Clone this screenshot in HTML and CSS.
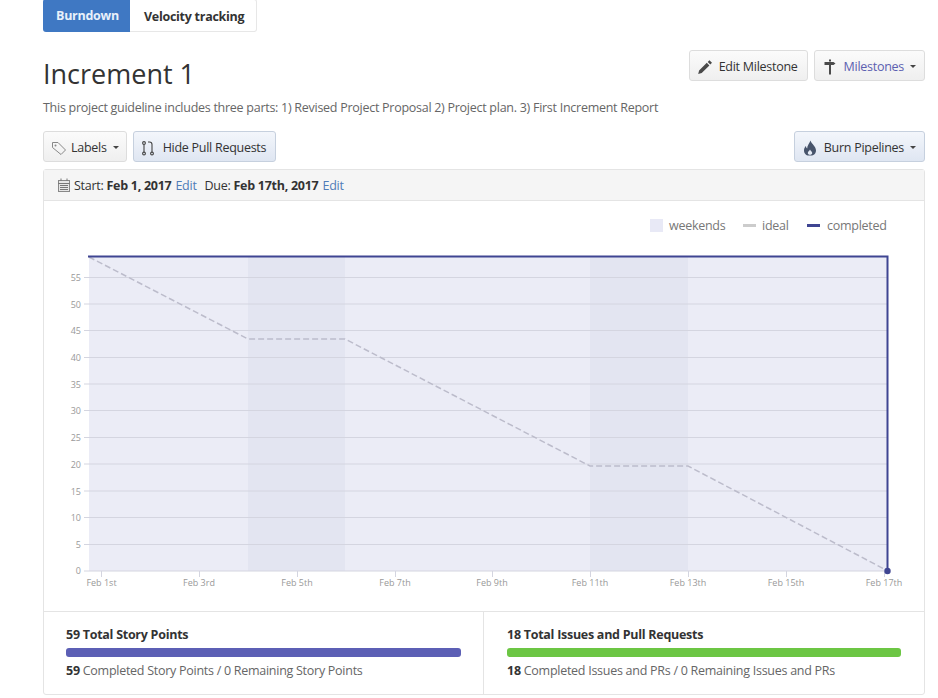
FILE: index.html
```html
<!DOCTYPE html>
<html lang="en">
  <head>
    <title>Increment 1 - Burndown</title>
    <meta name="viewport" content="width=device-width, initial-scale=1">
    <link rel="stylesheet" href="styles.css">
  </head>
  <body>
    <div class="tabs">
      <a class="tab active">Burndown</a>
      <a class="tab">Velocity tracking</a>
    </div>

    <div class="title-row">
      <h1>Increment 1</h1>
      <div class="actions">
        <button class="btn edit-btn">
          <svg class="icon" viewBox="0 0 16 16" width="16" height="16"><path fill="#4a4a4a" d="M12.400 1.200l2.600 2.600-1.700 1.700-2.600-2.600zM9.800 3.800l2.600 2.600-7.700 7.700-3.500.9.900-3.500z"/></svg>
          Edit Milestone
        </button>
        <button class="btn">
          <svg class="icon" viewBox="0 0 16 16" width="16" height="16"><path fill="#4a4a4a" d="M7 .5h2v2H7zM2.500 3h9l2 1.500-2 1.500H9v9.500H7V6H2.500z"/></svg>
          <span class="purple">Milestones</span><span class="caret"></span>
        </button>
      </div>
    </div>
    <p class="desc">This project guideline includes three parts: 1) Revised Project Proposal 2) Project plan. 3) First Increment Report</p>

    <div class="toolbar">
      <div class="actions">
        <button class="btn labels-btn">
          <svg class="icon" viewBox="0 0 16 16" width="16" height="16"><path fill="none" stroke="#888" stroke-width="1" d="M1.500 2.500h5.500l7.500 7.500-4.500 4.500-8.500-7z"/><circle cx="4.500" cy="5.500" r="1" fill="#888"/></svg>
          Labels<span class="caret"></span>
        </button>
        <button class="btn blue hide-btn">
          <svg class="icon" viewBox="0 0 16 16" width="16" height="16"><g fill="none" stroke="#444" stroke-width="1.100"><circle cx="3" cy="3" r="1.400"/><circle cx="3" cy="13.500" r="1.400"/><circle cx="11" cy="13.500" r="1.400"/><path d="M3 4.500v7.500M11 12V4.500q0-2.500-2.500-2.500H7"/></g></svg>
          Hide Pull Requests
        </button>
      </div>
      <button class="btn blue">
        <svg class="icon" viewBox="0 0 16 16" width="16" height="16"><path fill="#47546b" d="M8.500.5c.5 3 5.500 5.500 5.500 10 0 3-2.300 5-5 5H6.800C4 15.500 2 13.400 2 10.500c0-2 .8-3.500 2-4.500 0 1.200.4 2 1.200 2.500C5 5.500 7.500 3.500 8.500.5zM8 9.500c-.6 1.300-2.200 2-2.200 3.500 0 1.200 1 1.800 2.200 1.800s2.200-.6 2.200-1.800C10.200 11.500 8.500 11 8 9.500z"/></svg>
        Burn Pipelines<span class="caret"></span>
      </button>
    </div>

    <div class="panel">
      <div class="panel-head">
        <svg class="cal" viewBox="0 0 14 14" width="14" height="14"><rect x="1.500" y="2.500" width="11" height="11" fill="#e6e6e6" stroke="#888"/><path stroke="#777" d="M1 5.500h12M3 7.500h8M3 9.500h8M3 11.500h8M4 .5v2.500M10 .5v2.500"/></svg>
        <span>Start: <b>Feb 1, 2017</b> <a>Edit</a></span>
        <span class="due">Due: <b>Feb 17th, 2017</b> <a>Edit</a></span>
      </div>

      <svg class="chart" viewBox="0 0 880 410" width="880" height="410">
        <!-- svg top sits at y=201 on the page, left at x=44 -->
        <g transform="translate(-44 -201)">
          <rect x="650" y="219" width="13" height="13" fill="#e8e9f6"/>
          <text class="lg" x="669" y="230">weekends</text>
          <rect x="743" y="224" width="13" height="3" fill="#ccc"/>
          <text class="lg" x="762" y="230">ideal</text>
          <rect x="807" y="224" width="13" height="3" fill="#3f4592"/>
          <text class="lg" x="827" y="230">completed</text>

          <rect x="89" y="257" width="799" height="314" fill="#ebecf6"/>
          <rect x="248" y="257" width="97" height="314" fill="#e3e5f1"/>
          <rect x="590" y="257" width="98" height="314" fill="#e3e5f1"/>

          <g class="grid">
            <path d="M84 277.500H888M84 304H888M84 330.500H888M84 357.500H888M84 384H888M84 410.500H888M84 437.500H888M84 464H888M84 491H888M84 517.500H888M84 544.500H888M84 571H888"/>
            <path d="M101.500 571v6M199.500 571v6M297.500 571v6M395.500 571v6M492.500 571v6M590.500 571v6M688.500 571v6M786.500 571v6M884.500 571v6"/>
          </g>

          <g class="yl">
            <text x="81" y="281">55</text><text x="81" y="308">50</text><text x="81" y="334">45</text>
            <text x="81" y="361">40</text><text x="81" y="388">35</text><text x="81" y="414">30</text>
            <text x="81" y="441">25</text><text x="81" y="468">20</text><text x="81" y="495">15</text>
            <text x="81" y="521">10</text><text x="81" y="548">5</text><text x="81" y="574">0</text>
          </g>
          <g class="xl">
            <text x="101.500" y="586">Feb 1st</text><text x="199" y="586">Feb 3rd</text><text x="297" y="586">Feb 5th</text>
            <text x="395" y="586">Feb 7th</text><text x="492" y="586">Feb 9th</text><text x="590" y="586">Feb 11th</text>
            <text x="688" y="586">Feb 13th</text><text x="786" y="586">Feb 15th</text><text x="884" y="586">Feb 17th</text>
          </g>

          <path class="ideal" d="M89 257L248 339H345L590 466H688L888 571"/>
          <path class="done" d="M88 256.500H887.500V571"/>
          <circle cx="887.500" cy="571" r="3.200" fill="#3f4592"/>
        </g>
      </svg>

      <div class="stats">
        <div class="stat">
          <h4>59 Total Story Points</h4>
          <div class="bar purple-bar"></div>
          <p><b>59</b> Completed Story Points / 0 Remaining Story Points</p>
        </div>
        <div class="stat">
          <h4>18 Total Issues and Pull Requests</h4>
          <div class="bar green-bar"></div>
          <p><b>18</b> Completed Issues and PRs / 0 Remaining Issues and PRs</p>
        </div>
      </div>
    </div>
  </body>
</html>
```
FILE: styles.css
```css
body {
  margin: 0;
  height: 698px;
  overflow: hidden;
  padding: 0 13px 0 43px;
  background-color: #fff;
  color: #333;
  font-family: "Open Sans", "Noto Sans", sans-serif;
  font-size: 12.5px;
  letter-spacing: -0.27px;
}
.tabs {
  display: flex;
  margin-top: -1px;
}
.tab {
  padding: 0 12px 0 14px;
  height: 31px;
  line-height: 33px;
  font-weight: 700;
  border: 1px solid #e7e7e7;
  border-left: 0;
  border-radius: 0 3px 3px 0;
}
.tab.active {
  padding: 0 11px 0 13px;
  background-color: #3f78c3;
  color: #e8f0fa;
  border: 0;
  border-radius: 3px 0 0 3px;
  height: 33px;
  line-height: 34px;
}
.title-row {
  display: flex;
  justify-content: space-between;
  margin-top: 18px;
}
h1 {
  margin: 5px 0 0;
  font-size: 27px;
  font-weight: 400;
  line-height: 38px;
  letter-spacing: 0;
  color: #333;
}
.actions {
  display: flex;
  gap: 6px;
}
.btn {
  display: flex;
  align-items: center;
  height: 31px;
  padding: 2px 7px 0;
  border: 1px solid #ddd;
  border-radius: 3px;
  background: linear-gradient(#fbfbfb, #efefef);
  color: #333;
  font: inherit;
  letter-spacing: inherit;
}
.btn.blue {
  background: linear-gradient(#f3f6fb, #dfe6f2);
  border-color: #c6d0de;
}
.edit-btn {
  padding-right: 9px;
}
.hide-btn {
  padding-right: 9px;
}
.labels-btn {
  padding-right: 6px;
}
.labels-btn .icon {
  margin-right: 4px;
}
.icon {
  margin-right: 6px;
}
.purple {
  color: #5c5fb0;
}
.caret {
  margin-left: 6px;
  margin-right: 1px;
  border-top: 3px solid #444;
  border-left: 3px solid transparent;
  border-right: 3px solid transparent;
}
.desc {
  margin: 6px 0 0;
  height: 18px;
  line-height: 18px;
  color: #666;
}
.toolbar {
  display: flex;
  justify-content: space-between;
  margin-top: 14px;
}
.panel {
  margin-top: 7px;
  border: 1px solid #e4e4e4;
  border-radius: 3px;
}
.panel-head {
  display: flex;
  align-items: center;
  height: 30px;
  padding-left: 13px;
  background-color: #f5f5f5;
  border-bottom: 1px solid #e4e4e4;
}
.panel-head a {
  margin-left: 1px;
  color: #4f7cb8;
}
.panel-head b {
  color: #333;
}
.cal {
  margin-right: 3px;
}
.due {
  margin-left: 8px;
}
.chart {
  display: block;
}
.lg {
  font-size: 12.5px;
  fill: #777;
}
.grid path {
  fill: none;
  stroke: #d4d5e0;
  stroke-width: 1;
}
.yl text {
  font-size: 9px;
  letter-spacing: 0;
  fill: #999;
  text-anchor: end;
}
.xl text {
  font-size: 9px;
  letter-spacing: 0;
  fill: #999;
  text-anchor: middle;
}
.ideal {
  fill: none;
  stroke: #bcbccb;
  stroke-width: 1.5;
  stroke-dasharray: 6 3;
}
.done {
  fill: none;
  stroke: #3f4592;
  stroke-width: 2;
}
.stats {
  display: flex;
  height: 82px;
  border-top: 1px solid #e4e4e4;
}
.stat {
  flex: 1;
  padding: 14px 23px 0;
}
.stat:first-child {
  flex: 0 0 395px;
  padding: 14px 22px 0;
}
.stat + .stat {
  border-left: 1px solid #e4e4e4;
}
.stat h4 {
  margin: 0;
  height: 22px;
  line-height: 18px;
  font-size: 12.5px;
  font-weight: 700;
}
.bar {
  height: 9px;
  border-radius: 3px;
}
.purple-bar {
  background-color: #5c5fb5;
}
.green-bar {
  background-color: #6cc644;
}
.stat p {
  margin: 5px 0 0;
  line-height: 18px;
  color: #666;
}
.stat p b {
  color: #333;
}
```
